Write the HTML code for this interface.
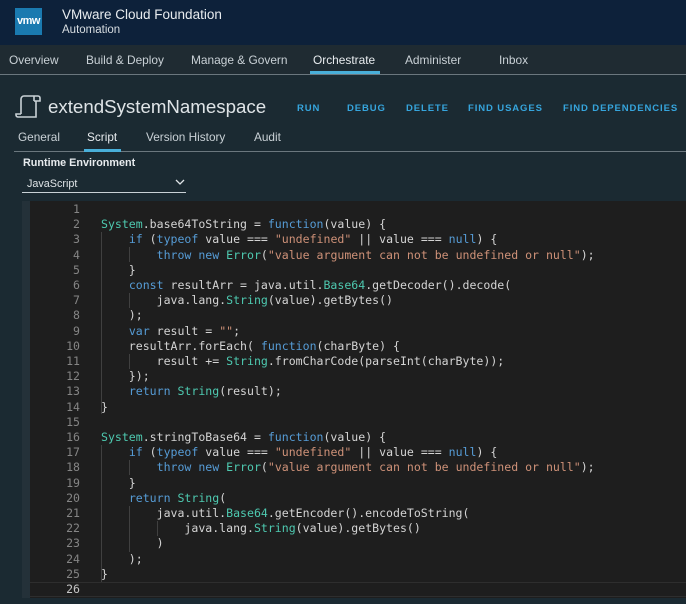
<!DOCTYPE html>
<html><head><meta charset="utf-8"><style>
*{margin:0;padding:0;box-sizing:border-box}
body{width:686px;height:604px;overflow:hidden;background:#1b2a32;font-family:"Liberation Sans",sans-serif;position:relative;color:#c9d1d6}
.a{position:absolute;white-space:nowrap}
.top{left:0;top:0;width:686px;height:45px;background:#0d213a}
.nav{left:0;top:45px;width:686px;height:30px;background:#1f2b32;border-bottom:1px solid #6b777e}
.nav span{position:absolute;top:8px;font-size:11.9px;color:#c9d1d6}
.btn{top:103px;font-size:9.5px;font-weight:bold;letter-spacing:0.9px;color:#36a5dd}
.tab{top:130px;font-size:11.8px;color:#c9d1d6}
.ed{left:30px;top:201px;width:656px;height:397px;background:#1e1e1e}
.code{left:30px;top:202px;font-family:"DejaVu Sans Mono",monospace;font-size:11.55px;line-height:15.2px;color:#d4d4d4}
.ln{position:absolute;left:0;width:50px;text-align:right;color:#858585}
.cl{position:absolute;left:71px;white-space:pre}
.k{color:#569cd6}.t{color:#4ec9b0}.s{color:#ce9178}
.g{position:absolute;width:1px;background:#404040}
</style></head><body>
<div class="a top"></div>
<div class="a" style="left:15px;top:8px;width:27px;height:27px;background:#1a7ab0;color:#fff;font-size:11px;font-weight:bold;line-height:27px;text-align:center;letter-spacing:-0.5px">vmw</div>
<div class="a" style="left:62px;top:7px;font-size:13.5px;color:#e8ecef">VMware Cloud Foundation</div>
<div class="a" style="left:62px;top:24px;font-size:11.5px;color:#d7dde1">Automation</div>
<div class="a nav">
<span style="left:9px">Overview</span><span style="left:86px">Build &amp; Deploy</span><span style="left:191px">Manage &amp; Govern</span><span style="left:313px;color:#e8ecef">Orchestrate</span><span style="left:405px">Administer</span><span style="left:499px">Inbox</span>
<div style="position:absolute;left:310px;top:26px;width:70px;height:3px;background:#49afd9"></div>
</div>
<svg class="a" style="left:14px;top:94px" width="28" height="28" viewBox="0 0 28 28" fill="none" stroke="#c9d1d6" stroke-width="1.6"><path d="M7 20V5a3 3 0 0 1 3-3h14a2 2 0 0 1 2 2v3h-6M20 2v5M22 7v16H4a2 2 0 0 1-2-2v-1h5"/></svg>
<div class="a" style="left:48px;top:96px;font-size:18.7px;color:#dfe4e7">extendSystemNamespace</div>
<div class="a btn" style="left:297px">RUN</div>
<div class="a btn" style="left:347px">DEBUG</div>
<div class="a btn" style="left:406px">DELETE</div>
<div class="a btn" style="left:468px">FIND USAGES</div>
<div class="a btn" style="left:563px">FIND DEPENDENCIES</div>
<div class="a tab" style="left:18px">General</div>
<div class="a tab" style="left:87px;color:#e8ecef">Script</div>
<div class="a tab" style="left:146px">Version History</div>
<div class="a tab" style="left:254px">Audit</div>
<div class="a" style="left:14px;top:151px;width:672px;height:1px;background:#6b777e"></div>
<div class="a" style="left:84px;top:149px;width:37px;height:3px;background:#49afd9"></div>
<div class="a" style="left:23px;top:157px;font-size:10.8px;font-weight:bold;color:#e8ecef">Runtime Environment</div>
<div class="a" style="left:27px;top:178px;font-size:10.8px;color:#dfe4e7">JavaScript</div>
<svg class="a" style="left:175px;top:178px" width="10" height="8" viewBox="0 0 10 8"><path d="M1 2l4 4 4-4" stroke="#dfe4e7" stroke-width="1.3" fill="none"/></svg>
<div class="a" style="left:22px;top:192px;width:164px;height:1px;background:#c9d1d6"></div>
<div class="a" style="left:22px;top:201px;width:8px;height:397px;background:#243139"></div>
<div class="a ed"></div>
<div class="a" style="left:30px;top:582px;width:656px;height:15px;border-top:1px solid #2e2e2e;border-bottom:1px solid #2e2e2e"></div>
<div class="a code" style="width:656px;height:396px">
<div class="g" style="left:71px;top:30px;height:182px"></div>
<div class="g" style="left:99px;top:45px;height:15px"></div>
<div class="g" style="left:99px;top:91px;height:15px"></div>
<div class="g" style="left:99px;top:152px;height:15px"></div>
<div class="g" style="left:71px;top:243px;height:137px"></div>
<div class="g" style="left:99px;top:258px;height:15px"></div>
<div class="g" style="left:99px;top:304px;height:46px"></div>
<div class="g" style="left:127px;top:319px;height:15px"></div>
<div class="ln" style="top:0">1</div><div class="ln" style="top:15.2px">2</div><div class="ln" style="top:30.4px">3</div><div class="ln" style="top:45.6px">4</div><div class="ln" style="top:60.8px">5</div><div class="ln" style="top:76px">6</div><div class="ln" style="top:91.2px">7</div><div class="ln" style="top:106.4px">8</div><div class="ln" style="top:121.6px">9</div><div class="ln" style="top:136.8px">10</div><div class="ln" style="top:152px">11</div><div class="ln" style="top:167.2px">12</div><div class="ln" style="top:182.4px">13</div><div class="ln" style="top:197.6px">14</div><div class="ln" style="top:212.8px">15</div><div class="ln" style="top:228px">16</div><div class="ln" style="top:243.2px">17</div><div class="ln" style="top:258.4px">18</div><div class="ln" style="top:273.6px">19</div><div class="ln" style="top:288.8px">20</div><div class="ln" style="top:304px">21</div><div class="ln" style="top:319.2px">22</div><div class="ln" style="top:334.4px">23</div><div class="ln" style="top:349.6px">24</div><div class="ln" style="top:364.8px">25</div><div class="ln" style="top:380px;color:#c6c6c6">26</div>
<div class="cl" style="top:0"> 
<span class="t">System</span>.base64ToString = <span class="k">function</span>(value) {
    <span class="k">if</span> (<span class="k">typeof</span> value === <span class="s">"undefined"</span> || value === <span class="k">null</span>) {
        <span class="k">throw</span> <span class="k">new</span> <span class="t">Error</span>(<span class="s">"value argument can not be undefined or null"</span>);
    }
    <span class="k">const</span> resultArr = java.util.<span class="t">Base64</span>.getDecoder().decode(
        java.lang.<span class="t">String</span>(value).getBytes()
    );
    <span class="k">var</span> result = <span class="s">""</span>;
    resultArr.forEach( <span class="k">function</span>(charByte) {
        result += <span class="t">String</span>.fromCharCode(parseInt(charByte));
    });
    <span class="k">return</span> <span class="t">String</span>(result);
}

<span class="t">System</span>.stringToBase64 = <span class="k">function</span>(value) {
    <span class="k">if</span> (<span class="k">typeof</span> value === <span class="s">"undefined"</span> || value === <span class="k">null</span>) {
        <span class="k">throw</span> <span class="k">new</span> <span class="t">Error</span>(<span class="s">"value argument can not be undefined or null"</span>);
    }
    <span class="k">return</span> <span class="t">String</span>(
        java.util.<span class="t">Base64</span>.getEncoder().encodeToString(
            java.lang.<span class="t">String</span>(value).getBytes()
        )
    );
}
</div>
</div>
</body></html>
